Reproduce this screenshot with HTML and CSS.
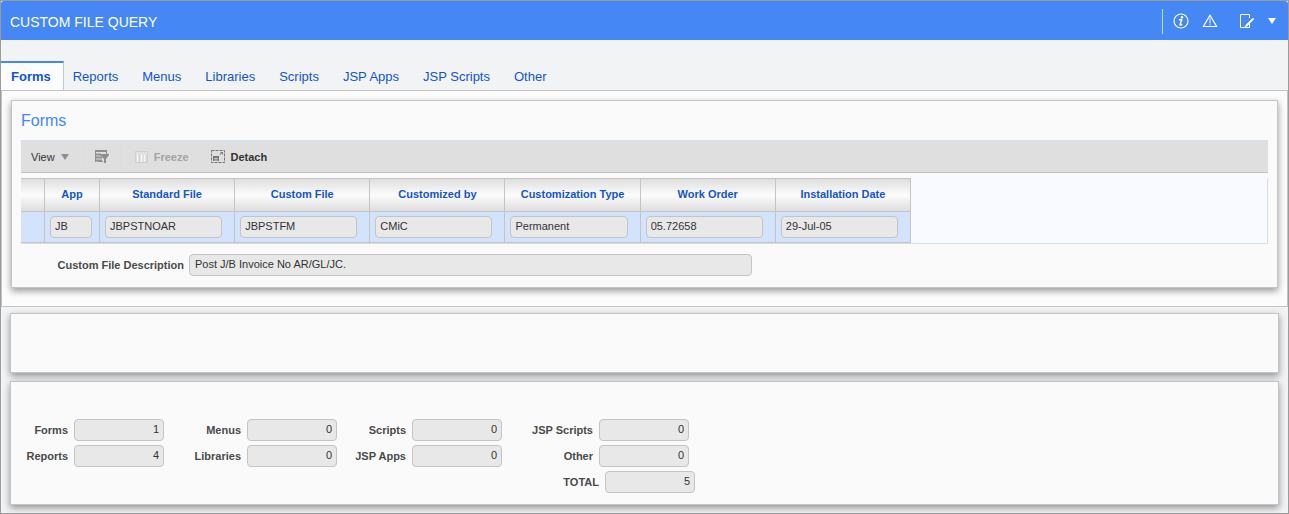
FILE: index.html
```html
<!DOCTYPE html>
<html lang="en">
<head>
    <meta charset="UTF-8">
    <meta name="viewport" content="width=device-width, initial-scale=1.0">
    <title>Custom File Query</title>
    <link rel="stylesheet" href="styles.css">
</head>
<body>
    <header class="page-header">
        <h1>CUSTOM FILE QUERY</h1>
        <div class="header-actions">
            <button type="button" class="icon-btn" aria-label="Information">
                <svg width="16" height="16" viewBox="0 0 16 16" fill="none" stroke="#fff">
                    <circle cx="8" cy="8" r="7" stroke-width="1.2"/>
                    <circle cx="9" cy="4.3" r="1.2" fill="#fff" stroke="none"/>
                    <path d="M6 6.8h2.6L7.2 11.7h2" stroke-width="1.5"/>
                </svg>
            </button>
            <button type="button" class="icon-btn" aria-label="Warnings">
                <svg width="16" height="16" viewBox="0 0 16 16" fill="none" stroke="#fff">
                    <path d="M8 2.2L14.6 13.5H1.4Z" stroke-width="1.2"/>
                    <path d="M8 5v5.5M8 11.4v1.2" stroke-width="1"/>
                </svg>
            </button>
            <button type="button" class="icon-btn icon-edit" aria-label="Edit notes">
                <svg width="16" height="16" viewBox="0 0 16 16" fill="none" stroke="#fff">
                    <path d="M10.5 5V1.5h-9v13h9V11" stroke-width="1"/>
                    <path d="M7 13L14.6 5.4" stroke-width="2"/>
                    <path d="M5.5 13.8l1.8-.6" stroke-width="1"/>
                </svg>
            </button>
            <button type="button" class="icon-btn icon-more" aria-label="More">
                <svg width="8" height="6" viewBox="0 0 8 6"><path d="M0 0h8L4 6Z" fill="#fff"/></svg>
            </button>
        </div>
    </header>

    <nav class="tabs">
        <a href="#forms" class="tab active">Forms</a>
        <a href="#reports" class="tab">Reports</a>
        <a href="#menus" class="tab">Menus</a>
        <a href="#libraries" class="tab">Libraries</a>
        <a href="#scripts" class="tab">Scripts</a>
        <a href="#jsp-apps" class="tab">JSP Apps</a>
        <a href="#jsp-scripts" class="tab">JSP Scripts</a>
        <a href="#other" class="tab">Other</a>
    </nav>

    <main>
        <div class="tab-panel" id="forms">
            <section class="card">
                <h2>Forms</h2>

                <div class="toolbar">
                    <button type="button" class="tool tool-view">View
                        <svg width="8" height="6" viewBox="0 0 8 6"><path d="M0 0h8L4 6Z" fill="#8c8f93"/></svg>
                    </button>
                    <button type="button" class="tool tool-filter" aria-label="Query by example">
                        <svg width="14" height="14" viewBox="0 0 14 14" fill="none" stroke="#8e8e8e">
                            <path d="M0 1h12M0 4.5h6M0 7.5h7M0 10.5h7" stroke-width="2"/>
                            <path d="M.5 0v12M11.5 0v4M3 11.5h5" stroke-width="1"/>
                            <path d="M5 4h9v1L11 9v4H9V9L5 5Z" fill="#8e8e8e" stroke="none"/>
                        </svg>
                    </button>
                    <button type="button" class="tool tool-freeze" disabled>
                        <svg width="13" height="12" viewBox="0 0 13 12" fill="none">
                            <path d="M.5.5h12v11H.5Z" fill="#d8d8d8" stroke="#cfcfcf"/>
                            <path d="M1 2h11" stroke="#f3f3f3" stroke-dasharray="2 1"/>
                            <path d="M2.5 3v8M6.5 3v8M9.5 3v8" stroke="#f5f5f5" stroke-width="1.5"/>
                        </svg>
                        Freeze
                    </button>
                    <button type="button" class="tool tool-detach">
                        <svg width="14" height="13" viewBox="0 0 14 13" fill="none" stroke="#777">
                            <path d="M.5.5h13v12H.5Z" stroke-dasharray="3 1"/>
                            <path d="M2 6h6v5H2Z" fill="#777" stroke="none"/>
                            <path d="M3 8.5h4M3 10.2h4M5 7.5v3" stroke="#ddd" stroke-width=".6"/>
                            <path d="M8.5 5l3-3M9.5 2.5h2v2"/>
                        </svg>
                        Detach
                    </button>
                </div>

                <div class="table-wrap">
                    <table>
                        <thead>
                            <tr>
                                <th class="col-select"></th>
                                <th class="col-app">App</th>
                                <th>Standard File</th>
                                <th>Custom File</th>
                                <th>Customized by</th>
                                <th>Customization Type</th>
                                <th>Work Order</th>
                                <th>Installation Date</th>
                            </tr>
                        </thead>
                        <tbody>
                            <tr>
                                <td></td>
                                <td><input type="text" value="JB" aria-label="App" readonly></td>
                                <td><input type="text" value="JBPSTNOAR" aria-label="Standard File" readonly></td>
                                <td><input type="text" value="JBPSTFM" aria-label="Custom File" readonly></td>
                                <td><input type="text" value="CMiC" aria-label="Customized by" readonly></td>
                                <td><input type="text" value="Permanent" aria-label="Customization Type" readonly></td>
                                <td><input type="text" value="05.72658" aria-label="Work Order" readonly></td>
                                <td><input type="text" value="29-Jul-05" aria-label="Installation Date" readonly></td>
                            </tr>
                        </tbody>
                    </table>
                </div>

                <div class="description">
                    <label for="description">Custom File Description</label>
                    <input type="text" id="description" value="Post J/B Invoice No AR/GL/JC." readonly>
                </div>
            </section>
        </div>

        <section class="card card-empty"></section>

        <section class="card card-totals">
            <div class="totals">
                <label for="t-forms">Forms</label>
                <input type="text" id="t-forms" value="1" readonly>
                <label for="t-menus">Menus</label>
                <input type="text" id="t-menus" value="0" readonly>
                <label for="t-scripts">Scripts</label>
                <input type="text" id="t-scripts" value="0" readonly>
                <label for="t-jsp-scripts">JSP Scripts</label>
                <input type="text" id="t-jsp-scripts" value="0" readonly>

                <label for="t-reports">Reports</label>
                <input type="text" id="t-reports" value="4" readonly>
                <label for="t-libraries">Libraries</label>
                <input type="text" id="t-libraries" value="0" readonly>
                <label for="t-jsp-apps">JSP Apps</label>
                <input type="text" id="t-jsp-apps" value="0" readonly>
                <label for="t-other">Other</label>
                <input type="text" id="t-other" value="0" readonly>

                <div class="grand-total">
                    <label for="t-total">TOTAL</label>
                    <input type="text" id="t-total" value="5" readonly>
                </div>
            </div>
        </section>
    </main>
</body>
</html>
```
FILE: styles.css
```css
* {
    box-sizing: border-box;
}

body {
    margin: 0;
    min-height: 100vh;
    border: 1px solid #9b9b9b;
    background-color: #f1f3f5;
    color: #333;
    font-family: "Liberation Sans", Arial, sans-serif;
    font-size: 11px;
}

button {
    padding: 0;
    border: 0;
    background: none;
    font: inherit;
    color: inherit;
}

svg {
    display: block;
    flex: none;
}

/* Header */
.page-header {
    display: flex;
    align-items: center;
    justify-content: space-between;
    height: 39px;
    padding: 1px 12px 0 9px;
    border-radius: 3px 3px 0 0;
    background-color: #4487f5;
    color: #fff;
}

.page-header h1 {
    margin: 0;
    padding-top: 2px;
    font-size: 14px;
    font-weight: normal;
}

.header-actions {
    display: flex;
    align-items: center;
    height: 25px;
    padding-left: 10px;
    border-left: 1px solid #c4d9fc;
    gap: 13px;
}

.icon-edit {
    margin-left: 8px;
}

/* Tabs */
.tabs {
    display: flex;
    padding-top: 21px;
}

.tab {
    height: 29px;
    padding: 0 15px 0 9px;
    border-top: 2px solid transparent;
    color: #1155cc;
    font-size: 13px;
    line-height: 27px;
    text-decoration: none;
}

.tab.active {
    padding: 0 12px 0 10px;
    border-top-color: #4487f5;
    border-right: 1px solid #c1c9d0;
    background-color: #fcfcfc;
    font-weight: bold;
}

.tab-panel {
    padding: 9px;
    padding-bottom: 18px;
    border: 1px solid #c4c4c4;
    background-color: #fcfcfc;
}

/* Cards */
.card {
    border: 1px solid #c4c4c4;
    background-color: #fafafa;
    box-shadow: 0 3px 7px rgba(0, 0, 0, 0.4);
}

.tab-panel .card {
    padding: 10px 9px 11px;
}

.card h2 {
    margin: 0 0 9px;
    color: #4487f5;
    font-size: 16px;
    font-weight: normal;
    line-height: 20px;
}

.card-empty {
    height: 60px;
    margin: 6px 9px 8px;
}

.card-totals {
    margin: 0 9px 8px;
    padding: 37px 9px 11px;
}

/* Toolbar */
.toolbar {
    display: flex;
    align-items: center;
    height: 33px;
    margin-bottom: 5px;
    padding-left: 10px;
    border-top: 1px solid #d3e3fb;
    border-bottom: 1px solid #c1c1c1;
    background-color: #dfdfdf;
}

.tool {
    display: flex;
    align-items: center;
    gap: 6px;
    height: 27px;
    font-weight: bold;
}

.tool-view {
    padding-right: 14px;
    font-weight: normal;
}

.tool-filter {
    padding: 0 11px;
    border-left: 1px solid #d6dde6;
    border-right: 1px solid #d6dde6;
}

.tool-freeze {
    padding: 0 22px 0 14px;
    color: #a3a3a3;
}

/* Records table */
.table-wrap {
    border-right: 1px solid #d5dde5;
    border-bottom: 1px solid #d5dde5;
    background-color: #f8faff;
}

table {
    width: 890px;
    table-layout: fixed;
    border-collapse: separate;
    border-spacing: 0;
}

th {
    height: 34px;
    padding: 0 0 2px;
    border: solid #c4c4c4;
    border-width: 1px 1px 1px 0;
    background: linear-gradient(#dedede, #fcfcfc 50%, #dedede);
    color: #1155cc;
}

.col-select {
    width: 24px;
}

.col-app {
    width: 55px;
}

td {
    padding: 4px 12px 4px 5px;
    border: solid #c4c4c4;
    border-width: 0 1px 1px 0;
    background-color: #d3e3fc;
}

td:nth-child(2) {
    padding-right: 7px;
}

/* Fields */
label {
    color: #4a4a4a;
    font-weight: bold;
}

input {
    display: block;
    width: 100%;
    height: 22px;
    padding: 0 5px 2px;
    border: 1px solid #c4c4c4;
    border-radius: 4px;
    background-color: #e8e8e8;
    color: #333;
    font: inherit;
}

td input {
    padding-left: 4px;
}

.description {
    display: flex;
    align-items: center;
    gap: 5px;
    margin-top: 10px;
}

.description label {
    width: 163px;
    text-align: right;
}

.description input {
    width: 563px;
}

/* Totals */
.totals {
    display: grid;
    grid-template-columns: 48px 90px 71px 90px 63px 90px 85px 96px;
    align-items: center;
    gap: 4px 6px;
}

.totals label {
    text-align: right;
}

.totals input {
    width: 90px;
    padding-right: 4px;
    text-align: right;
}

.grand-total {
    display: flex;
    grid-column: 7 / 9;
    align-items: center;
    justify-content: flex-end;
    gap: 6px;
}
```
